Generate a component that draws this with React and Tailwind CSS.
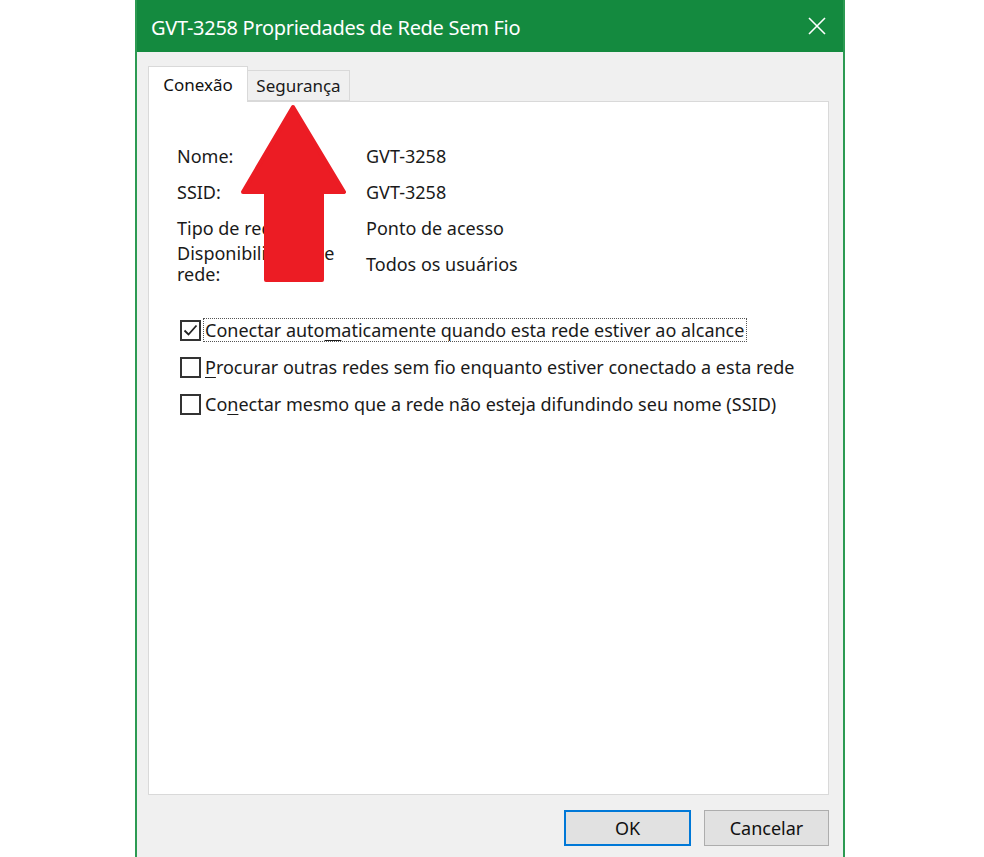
import React from 'react';

const font = { fontFamily: '"Noto Sans", "Open Sans", sans-serif' };

const Underlined = ({ before, key_, after }) => (
  <>
    {before}
    <span className="underline underline-offset-[3px]">{key_}</span>
    {after}
  </>
);

const CheckRow = ({ checked, focused, children }) => (
  <div className="flex items-center h-[24px]">
    <div className="w-[21px] h-[21px] border-2 border-[#333] bg-white ml-[3px] mr-[3px] flex items-center justify-center shrink-0">
      {checked && (
        <svg width="17" height="17" viewBox="0 0 17 17">
          <path d="M2.5 8.5 L6.5 12.5 L14.5 3.5" stroke="#222" strokeWidth="1.8" fill="none" />
        </svg>
      )}
    </div>
    <div className={`leading-[22px] pl-[1px] pr-[2px] ${focused ? 'outline outline-1 outline-dotted outline-[#555]' : ''}`}>
      {children}
    </div>
  </div>
);

const Row = ({ label, value }) => (
  <div className="grid grid-cols-[189px_1fr] items-center">
    <div className="max-w-[160px] leading-[21px]">{label}</div>
    <div className="leading-[21px]">{value}</div>
  </div>
);

export default function App() {
  return (
    <div className="w-[984px] h-[857px] bg-white overflow-hidden" style={font}>
      <div className="ml-[135px] w-[710px] h-[857px] border-x-2 border-[#2c9a52] flex flex-col">
        {/* Title bar */}
        <div className="h-[52px] bg-[#148a3f] flex items-center justify-between pl-[14px] pr-[16px] pt-[3px] shrink-0">
          <span className="text-white text-[20px] tracking-[-0.3px]">GVT-3258 Propriedades de Rede Sem Fio</span>
          <svg width="20" height="20" viewBox="0 0 20 20" className="-mt-[3px]">
            <path d="M2 2 L18 18 M18 2 L2 18" stroke="#fff" strokeWidth="1.6" />
          </svg>
        </div>

        {/* Body */}
        <div className="flex-1 bg-[#f0f0f0] pl-[11px] pr-[14px] pt-[14px] flex flex-col text-[18px] text-[#1a1a1a]">
          {/* Tabs */}
          <div className="flex items-end h-[35px] relative z-10">
            <div className="w-[100px] h-[36px] -mb-[1px] bg-white border border-b-0 border-[#d9d9d9] flex items-center justify-center text-[17px] text-[#111]">
              Conexão
            </div>
            <div className="w-[102px] h-[31px] bg-[#f0f0f0] border border-l-0 border-[#d9d9d9] flex items-center justify-center text-[17px]">
              Segurança
            </div>
          </div>

          {/* Panel */}
          <div className="h-[694px] bg-white border border-[#d9d9d9] pl-[28px] pt-[44px]">
            <div className="flex flex-col gap-[15px]">
              <Row label="Nome:" value="GVT-3258" />
              <Row label="SSID:" value="GVT-3258" />
              <div className="flex flex-col gap-[4px]">
                <Row label="Tipo de rede:" value="Ponto de acesso" />
                <Row label="Disponibilidade de rede:" value="Todos os usuários" />
              </div>
            </div>

            <div className="mt-[33px] flex flex-col gap-[13px]">
              <CheckRow checked focused>
                Conectar auto<span className="underline underline-offset-[3px]">m</span>aticamente quando esta rede estiver ao alcance
              </CheckRow>
              <CheckRow>
                <Underlined before="" key_="P" after="rocurar outras redes sem fio enquanto estiver conectado a esta rede" />
              </CheckRow>
              <CheckRow>
                <Underlined before="Co" key_="n" after="ectar mesmo que a rede não esteja difundindo seu nome (SSID)" />
              </CheckRow>
            </div>
          </div>

          {/* Buttons */}
          <div className="flex justify-end gap-[13px] mt-[15px]">
            <button className="w-[127px] h-[36px] bg-[#e1e1e1] border-2 border-[#0078d7] text-[18px] text-[#111]">OK</button>
            <button className="w-[125px] h-[36px] bg-[#e1e1e1] border border-[#adadad] text-[18px] text-[#111]">Cancelar</button>
          </div>
        </div>
      </div>

      {/* Red arrow annotation */}
      <svg className="absolute left-[240px] top-[104px]" width="110" height="180" viewBox="0 0 110 180">
        <path d="M53 3 L104 88 L82 88 L82 176 L26 176 L26 88 L3 88 Z" fill="#ec1c24" stroke="#ec1c24" strokeWidth="4" strokeLinejoin="round" />
      </svg>
    </div>
  );
}
